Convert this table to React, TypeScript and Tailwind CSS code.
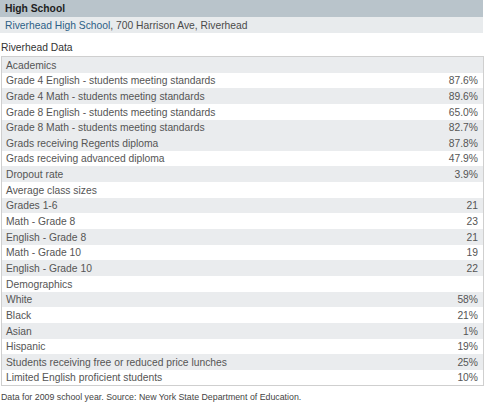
import React from "react";

type Row = { label: string; value?: string; shade: boolean };

const rows: Row[] = [
  { label: "Academics", shade: true },
  { label: "Grade 4 English - students meeting standards", value: "87.6%", shade: false },
  { label: "Grade 4 Math - students meeting standards", value: "89.6%", shade: true },
  { label: "Grade 8 English - students meeting standards", value: "65.0%", shade: false },
  { label: "Grade 8 Math - students meeting standards", value: "82.7%", shade: true },
  { label: "Grads receiving Regents diploma", value: "87.8%", shade: true },
  { label: "Grads receiving advanced diploma", value: "47.9%", shade: false },
  { label: "Dropout rate", value: "3.9%", shade: true },
  { label: "Average class sizes", shade: false },
  { label: "Grades 1-6", value: "21", shade: true },
  { label: "Math - Grade 8", value: "23", shade: false },
  { label: "English - Grade 8", value: "21", shade: true },
  { label: "Math - Grade 10", value: "19", shade: false },
  { label: "English - Grade 10", value: "22", shade: true },
  { label: "Demographics", shade: false },
  { label: "White", value: "58%", shade: true },
  { label: "Black", value: "21%", shade: false },
  { label: "Asian", value: "1%", shade: true },
  { label: "Hispanic", value: "19%", shade: false },
  { label: "Students receiving free or reduced price lunches", value: "25%", shade: true },
  { label: "Limited English proficient students", value: "10%", shade: false },
];

const App = () => {
  return (
    <div className="w-[500px] h-[404px] bg-white font-['Liberation_Sans',Arial,sans-serif] text-[10.3px] leading-none overflow-hidden">
      <div className="w-[483px]">
        <div className="h-[16.7px] pt-[2px] flex items-center px-[5px] bg-[#b9c4cb] font-bold text-[#1e1e1e]">High School</div>
        <div className="h-[16.7px] pt-[2px] flex items-center px-[5px] bg-[#e8ebed] text-[#4a4a4a]">
          <span className="text-[#2d5f86]">Riverhead High School</span>, 700 Harrison Ave, Riverhead
        </div>
      </div>

      <div className="h-[22.6px] pt-[6px] flex items-center px-[1px] text-[#333]">Riverhead Data</div>

      <div className="ml-[1px] w-[483px] border border-[#cfcfcf]">
        {rows.map((row, i) => (
          <div
            key={i}
            className={`h-[15.65px] pt-[2px] flex items-center justify-between pl-[4px] pr-[5px] text-[#555] ${row.shade ? "bg-[#eaecee]" : "bg-white"}`}
          >
            <span>{row.label}</span>
            {row.value && <span>{row.value}</span>}
          </div>
        ))}
      </div>

      <div className="mt-[6.5px] px-[1px] text-[8.8px] text-[#444]">
        Data for 2009 school year. Source: New York State Department of Education.
      </div>
    </div>
  );
};

export default App;
